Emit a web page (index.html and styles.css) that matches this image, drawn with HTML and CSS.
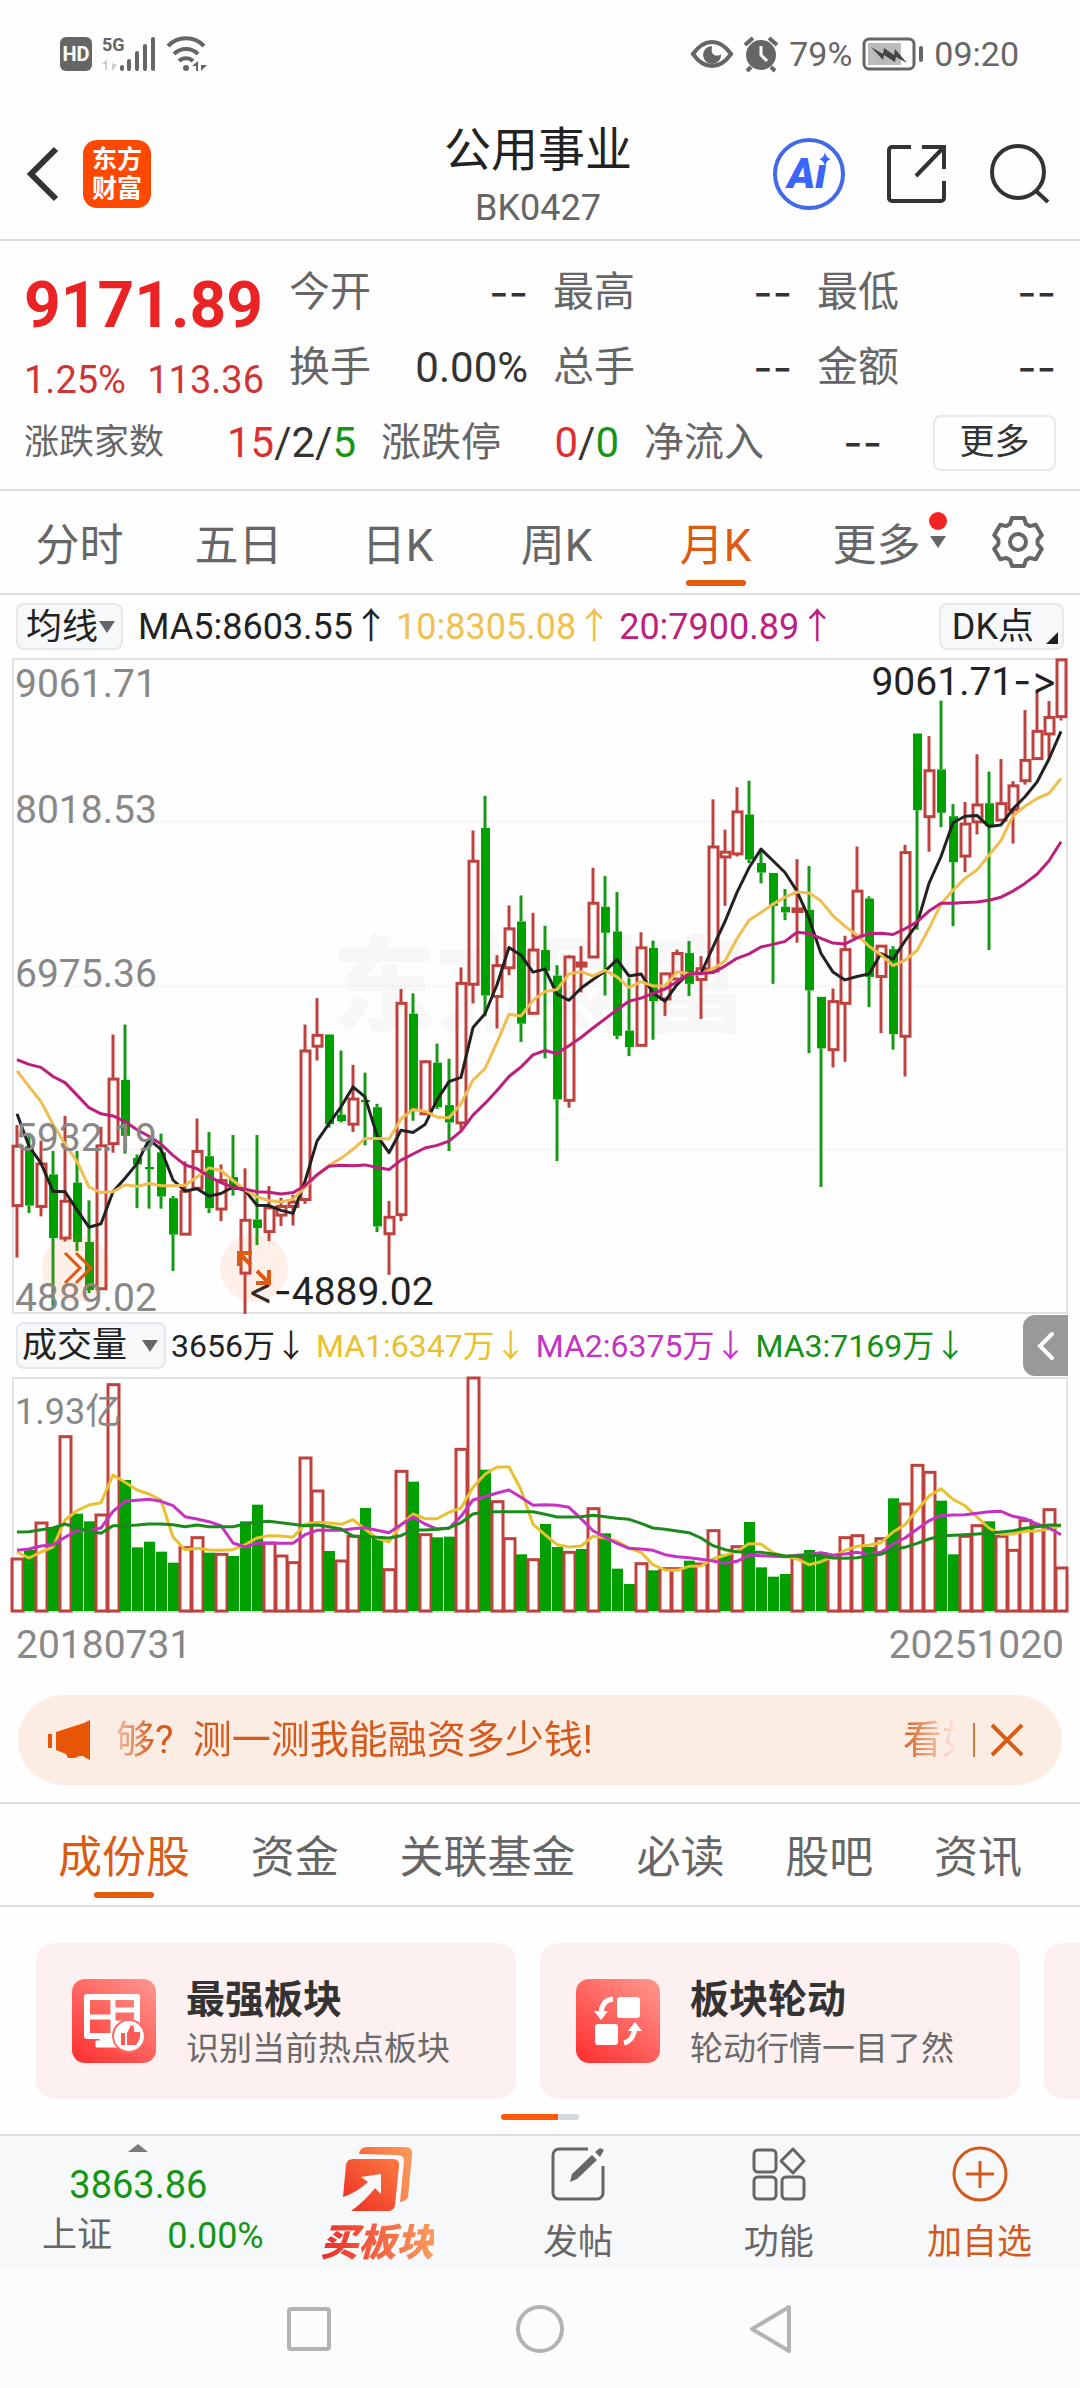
FILE: index.html
```html
<!DOCTYPE html>
<html lang="zh-CN">

<head>
    <meta charset="UTF-8">
    <meta name="viewport" content="width=device-width, initial-scale=1.0">
    <title>公用事业 BK0427</title>
    <link rel="stylesheet" href="styles.css">
    <script src="chart.js" defer></script>
</head>

<body>

    <div class="status-bar">
        <div class="status-group">
            <svg class="status-hd" width="32" height="34" viewBox="0 0 32 34">
                <rect width="32" height="34" rx="6" fill="#666" />
                <text x="16" y="24" text-anchor="middle" font-size="20" font-weight="700" fill="#fff">HD</text>
            </svg>
            <svg width="54" height="36" viewBox="0 0 54 36" fill="#666">
                <text x="0" y="15" font-size="18" font-weight="700">5G</text>
                <path d="M5 23v11H3v-6H0zM10 23v4l5 2-5 6V23z" fill="#ccc" />
                <rect x="18" y="29" width="4" height="6" rx="2" />
                <rect x="25" y="23" width="4" height="12" rx="2" />
                <rect x="33" y="15" width="4" height="20" rx="2" />
                <rect x="41" y="8" width="4" height="27" rx="2" />
                <rect x="49" y="1" width="4" height="34" rx="2" />
            </svg>
            <svg width="42" height="36" viewBox="0 0 42 36" fill="none" stroke="#666" stroke-width="4">
                <path d="M2 10a25 25 0 0 1 36 0M8 18a17 17 0 0 1 24 0M13 25a10 10 0 0 1 14 0" />
                <circle cx="20" cy="32" r="3" fill="#666" stroke="none" />
                <path d="M32 25v10h-2v-5h-4zM35 25v4h6l-6 6z" fill="#666" stroke="none" />
            </svg>
        </div>
        <div class="status-group">
            <svg width="42" height="36" viewBox="0 0 42 36">
                <path d="M2 18C9 8 15 6 21 6s12 2 19 12c-7 10-13 12-19 12S9 28 2 18z" fill="none" stroke="#666" stroke-width="4" />
                <path d="M21 10a9 9 0 1 0 9 8c-2 2-6 2-8 0s-1-5-1-8z" fill="#666" />
            </svg>
            <svg width="36" height="36" viewBox="0 0 36 36">
                <circle cx="18" cy="19" r="15" fill="#666" />
                <path d="M2 9l8-7M34 9l-8-7M8 31l-4 4M28 31l4 4" stroke="#666" stroke-width="4" />
                <path d="M18 10v9l6 6" fill="none" stroke="#fff" stroke-width="3" />
            </svg>
            <span>79%</span>
            <svg width="62" height="34" viewBox="0 0 62 34">
                <rect x="2" y="2" width="50" height="30" rx="5" fill="none" stroke="#666" stroke-width="3" />
                <rect x="6" y="6" width="33" height="22" fill="#bbb" />
                <path d="M9 10l12 7 1-6 10 7 1-6 12 14-11-6-1 5-11-7-1 5z" fill="#444" />
                <rect x="57" y="9" width="4" height="16" rx="2" fill="#666" />
            </svg>
            <span>09:20</span>
        </div>
    </div>

    <header class="header">
        <div class="header-left">
            <button class="icon-button" aria-label="返回">
                <svg width="34" height="56" viewBox="0 0 34 56" fill="none" stroke="#333" stroke-width="6">
                    <path d="M31 3L6 28l25 25" />
                </svg>
            </button>
            <a href="#" class="app-logo" aria-label="东方财富"><span>东方</span><span>财富</span></a>
        </div>
        <div class="header-title">
            <h1>公用事业</h1>
            <p>BK0427</p>
        </div>
        <div class="header-right">
            <button class="icon-button" aria-label="智能助手">
                <svg width="72" height="72" viewBox="0 0 72 72">
                    <circle cx="36" cy="36" r="34" fill="#fff" stroke="#4169e8" stroke-width="4" />
                    <text class="ai-text" x="34" y="50" text-anchor="middle" font-size="42" fill="#3a66fa">Ai</text>
                    <circle cx="52" cy="20" r="7" fill="#fff" />
                    <path d="M52 14q1 6 6 7-5 1-6 8-1-7-6-8 5-1 6-7z" fill="#3a66fa" />
                </svg>
            </button>
            <button class="icon-button" aria-label="分享">
                <svg width="60" height="60" viewBox="0 0 60 60" fill="none" stroke="#333" stroke-width="4">
                    <path d="M24 3H5a3 3 0 0 0-3 3v48a3 3 0 0 0 3 3h49a3 3 0 0 0 3-3V37" />
                    <path d="M35 3h22v22M57 3L29 32" />
                </svg>
            </button>
            <button class="icon-button" aria-label="搜索">
                <svg width="62" height="60" viewBox="0 0 62 60" fill="none" stroke="#333" stroke-width="4">
                    <circle cx="29" cy="28" r="26" />
                    <path d="M47 47l12 11" />
                </svg>
            </button>
        </div>
    </header>

    <section class="quote">
        <div class="quote-top">
            <div class="price">
                <strong>9171.89</strong>
                <p><span>1.25%</span><span>113.36</span></p>
            </div>
            <dl class="stats">
                <div><dt>今开</dt><dd class="dash">--</dd></div>
                <div><dt>最高</dt><dd class="dash">--</dd></div>
                <div><dt>最低</dt><dd class="dash">--</dd></div>
                <div><dt>换手</dt><dd>0.00%</dd></div>
                <div><dt>总手</dt><dd class="dash">--</dd></div>
                <div><dt>金额</dt><dd class="dash">--</dd></div>
            </dl>
        </div>
        <div class="quote-bottom">
            <dl class="breadth">
                <div>
                    <dt class="small">涨跌家数</dt>
                    <dd><span class="up">15</span>/2/<span class="down">5</span></dd>
                </div>
                <div>
                    <dt>涨跌停</dt>
                    <dd><span class="up">0</span>/<span class="down">0</span></dd>
                </div>
                <div><dt>净流入</dt><dd class="dash">--</dd></div>
            </dl>
            <button class="more-button">更多</button>
        </div>
    </section>

    <nav class="period-tabs" aria-label="周期">
        <button>分时</button>
        <button>五日</button>
        <button>日K</button>
        <button>周K</button>
        <button class="active">月K</button>
        <button class="period-more"><span>更多<i class="dot"></i><i class="caret"></i></span></button>
        <button class="settings" aria-label="设置">
            <svg width="52" height="52" viewBox="0 0 52 52" fill="none" stroke="#666" stroke-width="4" stroke-linejoin="round">
                <path d="M20 2H32L34 8L37.6 10.1L43.8 8.8L49.8 19.2L45.6 23.9V28.1L49.8 32.8L43.8 43.2L37.6 41.9L34 44L32 50H20L18 44L14.4 41.9L8.2 43.2L2.2 32.8L6.4 28.1V23.9L2.2 19.2L8.2 8.8L14.4 10.1L18 8Z" />
                <circle cx="26" cy="26" r="8" />
            </svg>
        </button>
    </nav>

    <section class="chart">
        <div class="chart-bar ma-bar">
            <span class="picker">
                <select aria-label="主图指标">
                    <option>均线</option>
                </select>
                <i class="caret"></i>
            </span>
            <p class="ma-values">
                <span>MA5:8603.55↑</span>
                <span class="ma10">10:8305.08↑</span>
                <span class="ma20">20:7900.89↑</span>
            </p>
            <button class="dk-button">DK点<i></i></button>
        </div>

        <div class="price-chart">
            <svg id="priceChart" viewBox="0 0 1056 656" role="img" aria-label="月K线"></svg>
            <button class="float-button scroll-button" aria-label="前进">
                <svg width="34" height="34" viewBox="0 0 34 34" fill="none" stroke="#dc5a12" stroke-width="3">
                    <path d="M6 2l15 15L6 32M17 2l15 15-15 15" />
                </svg>
            </button>
            <button class="float-button expand-button" aria-label="全屏">
                <svg width="34" height="34" viewBox="0 0 34 34" fill="none" stroke="#dc5a12" stroke-width="4">
                    <path d="M2 15V2h13M2 2l12 12M32 19v13H19M32 32L20 20" />
                </svg>
            </button>
        </div>

        <div class="chart-bar volume-bar">
            <span class="picker">
                <select aria-label="副图指标">
                    <option>成交量</option>
                </select>
                <i class="caret"></i>
            </span>
            <p class="volume-values">
                <span>3656万↓</span>
                <span class="vol-ma1">MA1:6347万↓</span>
                <span class="vol-ma2">MA2:6375万↓</span>
                <span class="vol-ma3">MA3:7169万↓</span>
            </p>
            <button class="collapse-button" aria-label="展开">
                <svg width="18" height="30" viewBox="0 0 18 30" fill="none" stroke="#fff" stroke-width="4" stroke-linecap="round">
                    <path d="M15 3L3 15l12 12" />
                </svg>
            </button>
        </div>

        <div class="volume-chart">
            <svg id="volumeChart" viewBox="0 0 1056 236" role="img" aria-label="成交量"></svg>
        </div>

        <div class="dates"><time>20180731</time><time>20251020</time></div>
    </section>

    <aside class="notice">
        <svg width="48" height="40" viewBox="0 0 48 40" fill="#e85505">
            <path d="M0 14h4v14H0zM8 12L36 3l6-3v40l-6-3v-1h-5l-4 2h-7l-2-4-10-4z" />
        </svg>
        <a href="#" class="notice-text">
            <span>够? &nbsp;测一测我能融资多少钱!</span>
            <span class="notice-next">看如</span>
        </a>
        <button class="notice-close" aria-label="关闭">
            <svg width="34" height="34" viewBox="0 0 34 34" fill="none" stroke="#dc5a12" stroke-width="4">
                <path d="M2 2l30 30M32 2L2 32" />
            </svg>
        </button>
    </aside>

    <nav class="section-tabs" aria-label="板块内容">
        <button class="active">成份股</button>
        <button>资金</button>
        <button>关联基金</button>
        <button>必读</button>
        <button>股吧</button>
        <button>资讯</button>
    </nav>

    <section class="promo">
        <div class="cards">
            <a href="#" class="card">
                <svg width="84" height="84" viewBox="0 0 84 84">
                    <defs>
                        <linearGradient id="cardFill" x1="0" y1="1" x2="0.8" y2="0">
                            <stop offset="0" stop-color="#ff2d2d" />
                            <stop offset="1" stop-color="#ff9088" />
                        </linearGradient>
                    </defs>
                    <rect width="84" height="84" rx="13" fill="url(#cardFill)" />
                    <path d="M15 18h50v39H15z" fill="none" stroke="#fff" stroke-width="6" stroke-linejoin="round" />
                    <path d="M41 18v40M17 38h25M42 31h25M42 44h25" stroke="#fff" stroke-width="5" />
                    <path d="M28 57h14v7h-14zM24 62h24v6H24z" fill="#fff" stroke="#fff" />
                    <circle cx="57" cy="57" r="16" fill="#fff" stroke="#ff6a65" stroke-width="2" />
                    <path d="M49 54h4v12h-4zM55 54l4-8q4 0 3 7h6q1 7-4 13h-9z" fill="#ff5a55" />
                </svg>
                <span class="card-text"><strong>最强板块</strong><span>识别当前热点板块</span></span>
            </a>
            <a href="#" class="card">
                <svg width="84" height="84" viewBox="0 0 84 84">
                    <rect width="84" height="84" rx="13" fill="url(#cardFill)" />
                    <rect x="41" y="18" width="23" height="21" rx="3" fill="#fff" />
                    <rect x="19" y="45" width="23" height="21" rx="3" fill="#fff" />
                    <path d="M37 20Q26 21 25 34M48 64q9-2 11-15" fill="none" stroke="#fff" stroke-width="5" />
                    <path d="M18 32h14l-7 9zM52 52h14l-7-9z" fill="#fff" />
                </svg>
                <span class="card-text"><strong>板块轮动</strong><span>轮动行情一目了然</span></span>
            </a>
            <div class="card"></div>
        </div>
        <div class="pager"></div>
    </section>

    <footer class="toolbar">
        <a href="#" class="index">
            <i class="caret-up"></i>
            <strong>3863.86</strong>
            <span><em>上证</em><b>0.00%</b></span>
        </a>
        <button class="hot">
            <svg width="72" height="66" viewBox="0 0 72 66">
                <defs>
                    <linearGradient id="hotBack" x1="0" y1="0.3" x2="1" y2="0">
                        <stop offset="0" stop-color="#f8673a" />
                        <stop offset="1" stop-color="#f89c5c" />
                    </linearGradient>
                    <linearGradient id="hotFront" x1="0" y1="1" x2="1" y2="0">
                        <stop offset="0" stop-color="#ee2b24" />
                        <stop offset="1" stop-color="#fb7b40" />
                    </linearGradient>
                </defs>
                <path d="M18 8q1-7 8-7h38q8 0 7 8l-4 42q-1 4-8 5l4-41q0-6-7-6z" fill="url(#hotBack)" />
                <path d="M5 19q1-6 7-6h40q7 0 6 7l-4 39q-1 6-7 6H10q14-10 24-23l6 6V28l-20 3 7 5Q15 47 2 51z" fill="url(#hotFront)" />
            </svg>
            <span>买板块</span>
        </button>
        <button>
            <svg width="56" height="56" viewBox="0 0 56 56" fill="none" stroke="#666" stroke-width="3">
                <path d="M38 3H9a6 6 0 0 0-6 6v38a6 6 0 0 0 6 6h38a6 6 0 0 0 6-6V20" />
                <path d="M20 36l2-8L42 9l5 5-20 19zM45 6l5-4 4 2-4 7z" fill="#666" stroke="none" />
            </svg>
            <span>发帖</span>
        </button>
        <button>
            <svg width="56" height="56" viewBox="0 0 56 56" fill="none" stroke="#666" stroke-width="3">
                <rect x="3" y="4" width="22" height="22" rx="4" />
                <rect x="3" y="31" width="22" height="22" rx="4" />
                <rect x="31" y="31" width="22" height="22" rx="4" />
                <path d="M42 3l11 12-11 12-12-12z" stroke-linejoin="round" />
            </svg>
            <span>功能</span>
        </button>
        <button class="add">
            <svg width="56" height="56" viewBox="0 0 56 56" fill="none" stroke="#d35a1c" stroke-width="3">
                <circle cx="28" cy="28" r="26" />
                <path d="M28 15v27M14 28h28" />
            </svg>
            <span>加自选</span>
        </button>
    </footer>

    <div class="system-nav">
        <button class="icon-button" aria-label="最近任务">
            <svg width="48" height="50" viewBox="0 0 48 50" fill="none" stroke="#b3b3b3" stroke-width="4">
                <rect x="4" y="5" width="40" height="40" rx="2" />
            </svg>
        </button>
        <button class="icon-button" aria-label="主屏幕">
            <svg width="50" height="50" viewBox="0 0 50 50" fill="none" stroke="#b3b3b3" stroke-width="4">
                <circle cx="25" cy="25" r="22" />
            </svg>
        </button>
        <button class="icon-button" aria-label="系统返回">
            <svg width="46" height="50" viewBox="0 0 46 50" fill="none" stroke="#b3b3b3" stroke-width="4" stroke-linejoin="round">
                <path d="M41 3v44L4 25z" />
            </svg>
        </button>
    </div>

</body>

</html>
```
FILE: styles.css
```css
* {
    box-sizing: border-box;
}

body {
    margin: 0;
    background-color: #fefefe;
    color: #333;
    font-family: Roboto, "Noto Sans CJK SC", sans-serif;
    line-height: 1;
}

h1,
p,
dl,
dd {
    margin: 0;
}

button,
select {
    margin: 0;
    padding: 0;
    border: 0;
    background: none;
    color: inherit;
    font: inherit;
}

a {
    color: inherit;
    text-decoration: none;
}

svg {
    display: block;
    flex: none;
    overflow: visible;
}

i,
em {
    font-style: normal;
}

.up {
    color: #dc3030;
}

.down {
    color: #149614;
}

.caret {
    border: 8px solid transparent;
    border-top: 12px solid #666;
    border-bottom: 0;
}

/* status bar */

.status-bar {
    display: flex;
    justify-content: space-between;
    align-items: center;
    min-height: 108px;
    padding: 0 61px 0 60px;
    color: #666;
    font-size: 34px;
}

.status-group {
    display: flex;
    align-items: center;
    gap: 10px;
}

/* header */

.header {
    display: grid;
    grid-template-columns: 1fr auto 1fr;
    align-items: center;
    height: 133px;
    padding: 0 29px 0 25px;
    border-bottom: 2px solid #dcdcdc;
}

.header-left {
    display: flex;
    align-items: center;
    gap: 24px;
}

.app-logo {
    display: flex;
    flex-direction: column;
    align-items: center;
    justify-content: center;
    width: 68px;
    height: 68px;
    border-radius: 14px;
    background-color: #ff4800;
    color: #fff;
    font-size: 25px;
    font-weight: 700;
    line-height: 29px;
}

.header-title {
    padding-top: 8px;
    text-align: center;
}

.header-title h1 {
    color: #222;
    font-size: 47px;
    font-weight: 400;
    line-height: 60px;
}

.header-title p {
    color: #666;
    font-size: 36px;
    line-height: 56px;
}

.header-right {
    display: flex;
    align-items: center;
    justify-content: flex-end;
    gap: 42px;
}

.ai-text {
    font-weight: 900;
    font-style: italic;
}

/* quote */

.quote {
    padding: 14px 24px 9px;
    border-bottom: 2px solid #dcdcdc;
}

.quote-top {
    display: flex;
    gap: 25px;
}

.price {
    flex: none;
    width: 240px;
    padding-top: 2px;
    color: #ea2424;
}

.price strong {
    display: block;
    font-size: 64px;
    line-height: 98px;
}

.price p {
    display: flex;
    justify-content: space-between;
    color: #d03434;
    font-size: 38px;
    line-height: 50px;
}

.stats {
    flex: 1;
    display: grid;
    grid-template-columns: repeat(3, 1fr);
    column-gap: 25px;
}

.stats div,
.breadth div {
    display: flex;
    justify-content: space-between;
    line-height: 75px;
    white-space: nowrap;
}

dt {
    color: #666;
    font-size: 41px;
}

dt.small {
    font-size: 35px;
}

.breadth dt:not(.small) {
    font-size: 40px;
}

dd {
    font-size: 42px;
}

.dash {
    font-family: Inter, sans-serif;
}

.quote-bottom {
    display: flex;
    align-items: center;
    gap: 51px;
}

.breadth {
    flex: 1;
    display: grid;
    grid-template-columns: 332fr 238fr 238fr;
    column-gap: 25px;
}

.more-button {
    width: 123px;
    height: 56px;
    border: 2px solid #e8e8e8;
    border-radius: 8px;
    font-size: 35px;
}

/* period tabs */

.period-tabs {
    display: grid;
    grid-template-columns: repeat(5, 159fr) 185fr 76fr;
    height: 104px;
    padding-right: 24px;
    border-bottom: 2px solid #dcdcdc;
    color: #666;
    font-size: 44px;
}

.period-tabs button {
    display: flex;
    align-items: center;
    justify-content: center;
    padding-top: 8px;
}

.period-tabs .settings {
    padding-top: 0;
}

.period-tabs .active,
.section-tabs .active {
    position: relative;
    color: #dc5a12;
}

.period-tabs .active::after,
.section-tabs .active::after {
    content: "";
    position: absolute;
    left: 50%;
    bottom: 7px;
    width: 60px;
    height: 6px;
    margin-left: -30px;
    border-radius: 3px;
    background-color: #e65a0b;
}

.period-more span {
    position: relative;
    padding-right: 22px;
}

.period-more .dot {
    position: absolute;
    top: -12px;
    right: -4px;
    width: 18px;
    height: 18px;
    border-radius: 50%;
    background-color: #f22424;
}

.period-more .caret {
    position: absolute;
    top: 12px;
    right: -3px;
}

/* charts */

.chart-bar {
    display: flex;
    align-items: center;
    height: 63px;
    padding: 0 16px;
    color: #222;
    white-space: nowrap;
}

.picker {
    display: flex;
    align-items: center;
    height: 47px;
    padding: 0 6px 0 8px;
    border: 2px solid #e4e8ec;
    border-radius: 8px;
    background-color: #f6f8fa;
    font-size: 36px;
}

.picker select {
    appearance: none;
}

.ma-values {
    display: flex;
    gap: 7px;
    padding-left: 15px;
    font-size: 36px;
}

.ma10 {
    color: #f0c050;
}

.ma20 {
    color: #be1e7d;
}

.dk-button {
    display: flex;
    align-items: center;
    height: 47px;
    margin-left: auto;
    padding: 0 4px 0 11px;
    border: 2px solid #e4e8ec;
    border-radius: 8px;
    background-color: #f6f8fa;
    font-size: 36px;
}

.dk-button i {
    align-self: flex-end;
    margin: 0 0 4px 12px;
    border-left: 12px solid transparent;
    border-bottom: 12px solid #222;
}

.price-chart {
    position: relative;
    margin: 0 12px;
}

.price-chart > svg,
.volume-chart > svg {
    width: 100%;
    height: auto;
}

.volume-chart {
    margin: 0 12px;
}

.frame {
    fill: none;
    stroke: #e2e2e2;
    stroke-width: 2;
}

.grid-line {
    stroke: #e4e4e4;
    stroke-dasharray: 2 2;
}

.watermark {
    fill: #f7f7f7;
    font-size: 104px;
    font-weight: 900;
}

.axis-label {
    fill: #888;
    font-size: 39px;
}

.volume-chart .axis-label {
    font-size: 36px;
}

.peak-label {
    fill: #222;
    font-size: 39px;
}

/* Inter would join "->" into one arrow glyph */
.peak-arrow {
    font-family: Inter, sans-serif;
    font-variant-ligatures: none;
}

.rise {
    fill: none;
    stroke: #be413e;
    stroke-width: 3;
}

.fall {
    fill: #00a000;
}

.wick-rise {
    stroke: #be413e;
    stroke-width: 3;
}

.wick-fall {
    stroke: #149a14;
    stroke-width: 3;
}

.line {
    fill: none;
    stroke-width: 3;
    stroke-linejoin: round;
}

.float-button {
    position: absolute;
    bottom: 12px;
    display: flex;
    align-items: center;
    justify-content: center;
    width: 68px;
    height: 68px;
    border-radius: 50%;
    background-color: rgba(255, 110, 50, 0.1);
}

.scroll-button {
    left: 30px;
}

.expand-button {
    left: 208px;
}

.volume-bar {
    padding-right: 12px;
}

.volume-bar .picker {
    padding-left: 4px;
    font-size: 35px;
}

.volume-bar .caret {
    margin-left: 14px;
}

.volume-values {
    display: flex;
    gap: 9px;
    padding-left: 5px;
    font-size: 32px;
}

.vol-ma1 {
    color: #e8c22e;
}

.vol-ma2 {
    color: #c433c4;
}

.vol-ma3 {
    color: #149114;
}

.collapse-button {
    display: flex;
    align-items: center;
    justify-content: center;
    width: 45px;
    height: 61px;
    margin-left: auto;
    border-radius: 12px 0 0 12px;
    background-color: #999;
}

.dates {
    display: flex;
    justify-content: space-between;
    padding: 0 16px;
    color: #888;
    font-size: 39px;
    line-height: 64px;
}

/* notice */

.notice {
    display: flex;
    align-items: center;
    height: 90px;
    margin: 18px 18px 17px;
    padding: 0 38px 0 30px;
    border-radius: 45px;
    background-color: #fcede4;
    color: #d65a1c;
    font-size: 39px;
}

.notice-text {
    flex: 1;
    display: flex;
    justify-content: space-between;
    padding: 0 4px 0 20px;
    line-height: 60px;
    white-space: nowrap;
    mask-image: linear-gradient(to right, transparent, #000 60px, #000 calc(100% - 60px), transparent calc(100% - 4px));
}

.notice-next {
    margin-right: -24px;
}

.notice-close {
    margin-left: 12px;
    padding-left: 15px;
    border-left: 2px solid #dc7a45;
}

/* section tabs */

.section-tabs {
    display: flex;
    justify-content: space-between;
    height: 105px;
    padding: 0 58px;
    border-top: 2px solid #dcdcdc;
    border-bottom: 2px solid #dcdcdc;
    color: #666;
    font-size: 44px;
}

.section-tabs button {
    padding-top: 6px;
}

/* promo cards */

.promo {
    padding-top: 36px;
    overflow: hidden;
}

.cards {
    display: flex;
    gap: 24px;
    padding-left: 36px;
}

.card {
    flex: none;
    display: flex;
    align-items: center;
    gap: 30px;
    width: 480px;
    height: 156px;
    padding: 0 36px;
    border-radius: 18px;
    background-color: #fdf0f0;
}

.card-text {
    display: flex;
    flex-direction: column;
    padding-top: 4px;
    color: #6a6a6a;
    font-size: 33px;
    line-height: 46px;
}

.card-text strong {
    color: #333;
    font-size: 39px;
    line-height: 52px;
}

.pager {
    width: 78px;
    height: 6px;
    margin: 15px auto 14px;
    border-radius: 3px;
    background: linear-gradient(to right, #ff5a0a 57px, #d5d9de 57px);
}

/* toolbar */

.toolbar {
    display: grid;
    grid-template-columns: 277fr repeat(4, 201fr);
    height: 136px;
    border-top: 2px solid #dcdce2;
    background-color: #f7f8fa;
    color: #666;
    font-size: 35px;
}

.index {
    display: flex;
    flex-direction: column;
    align-items: center;
    padding-top: 8px;
    color: #149614;
}

.caret-up {
    border: 10px solid transparent;
    border-top: 0;
    border-bottom: 8px solid #7a7a80;
}

.index strong {
    font-size: 38px;
    font-weight: 400;
    line-height: 66px;
}

.index span {
    align-self: stretch;
    display: flex;
    justify-content: space-between;
    padding: 0 13px 0 42px;
    line-height: 36px;
}

.index em {
    color: #666;
}

.index b {
    font-size: 36px;
    font-weight: 400;
}

.toolbar button {
    display: flex;
    flex-direction: column;
    align-items: center;
    justify-content: space-between;
    padding: 10px 0 2px;
}

.toolbar button span {
    line-height: 50px;
}

.toolbar .hot span {
    background: linear-gradient(to right, #ea2d28, #fa9a5c);
    background-clip: text;
    color: transparent;
    font-size: 38px;
    font-weight: 900;
    font-style: italic;
}

.toolbar .add {
    color: #d35a1c;
}

.system-nav {
    display: grid;
    grid-template-columns: repeat(3, 231px);
    justify-content: center;
    justify-items: center;
    height: 118px;
    background-color: #fcfcfc;
}
```
FILE: chart.js
```js
const STEP = 12;
const FIRST = 5;

// candles: direction, high, body top, body bottom, low (levels counted down from the top)
const LEVEL_TOP = 18;
const LEVEL_RANGE = 1510;

const candles = [
    ["r", 1094, 1143, 1280, 1400], ["g", 1112, 1143, 1280, 1297], ["r", 1130, 1184, 1282, 1305], ["g", 1154, 1208, 1355, 1512],
    ["r", 1073, 1270, 1355, 1363], ["g", 1154, 1227, 1364, 1385], ["g", 1268, 1364, 1475, 1482], ["r", 1098, 1142, 1472, 1472],
    ["r", 885, 988, 1137, 1158], ["g", 862, 990, 1119, 1160], ["g", 1162, 1170, 1185, 1286], ["g", 1130, 1191, 1196, 1287],
    ["g", 1114, 1157, 1259, 1287], ["g", 1258, 1263, 1347, 1431], ["r", 1178, 1247, 1346, 1346], ["r", 1079, 1155, 1240, 1240],
    ["g", 1110, 1166, 1286, 1297], ["r", 1185, 1222, 1288, 1316], ["g", 1117, 1214, 1244, 1257], ["r", 1194, 1314, 1436, 1530],
    ["g", 1117, 1312, 1332, 1371], ["r", 1235, 1285, 1340, 1362], ["r", 1262, 1282, 1302, 1327], ["r", 1255, 1272, 1282, 1326],
    ["r", 862, 923, 1266, 1276], ["r", 801, 887, 912, 945], ["g", 885, 885, 1092, 1100], ["g", 922, 1070, 1085, 1088],
    ["r", 955, 1034, 1092, 1110], ["g", 973, 1036, 1041, 1141], ["g", 1045, 1053, 1328, 1341], ["r", 1269, 1307, 1345, 1440],
    ["r", 780, 813, 1301, 1316], ["g", 790, 837, 1062, 1084], ["r", 945, 948, 1068, 1068], ["g", 906, 950, 1053, 1057],
    ["g", 941, 1048, 1088, 1154], ["r", 730, 767, 1089, 1105], ["r", 414, 485, 769, 813], ["g", 334, 408, 795, 843],
    ["r", 702, 726, 797, 871], ["r", 587, 641, 731, 748], ["g", 564, 624, 860, 902], ["r", 604, 690, 836, 836],
    ["g", 634, 690, 738, 940], ["g", 725, 749, 1035, 1177], ["r", 702, 706, 1037, 1054], ["r", 681, 720, 727, 788],
    ["r", 500, 582, 706, 706], ["g", 519, 590, 650, 795], ["g", 556, 647, 888, 896], ["g", 755, 876, 914, 935],
    ["r", 649, 685, 910, 910], ["g", 668, 685, 808, 897], ["r", 745, 745, 803, 842], ["r", 689, 698, 757, 757],
    ["g", 669, 697, 768, 796], ["r", 704, 733, 758, 849], ["r", 342, 452, 738, 738], ["r", 412, 464, 475, 588],
    ["r", 314, 371, 468, 474], ["g", 299, 377, 481, 489], ["g", 456, 489, 511, 536], ["g", 512, 512, 588, 768],
    ["g", 549, 590, 603, 621], ["r", 480, 595, 601, 673], ["g", 496, 597, 783, 928], ["g", 798, 798, 917, 1237],
    ["r", 779, 809, 920, 961], ["r", 657, 689, 813, 948], ["r", 451, 554, 658, 658], ["g", 566, 571, 752, 822],
    ["r", 681, 681, 751, 882], ["g", 681, 688, 884, 920], ["r", 447, 465, 889, 982], ["g", 190, 190, 367, 643],
    ["r", 196, 276, 382, 463], ["g", 114, 273, 373, 406], ["g", 353, 381, 487, 635], ["r", 348, 399, 473, 510],
    ["r", 238, 355, 394, 423], ["g", 278, 351, 404, 690], ["r", 249, 352, 390, 390], ["r", 300, 311, 366, 444],
    ["r", 136, 252, 299, 308], ["r", 92, 185, 248, 248], ["r", 115, 153, 191, 246], ["r", 20, 20, 151, 160]
];

const ma5 = [1068, 1143, 1182, 1247, 1248, 1290, 1330, 1322, 1248, 1217, 1183, 1127, 1150, 1221, 1246, 1241, 1258, 1252, 1237, 1245, 1279, 1280, 1291, 1298, 1224, 1131, 1091, 1052, 1006, 1029, 1118, 1158, 1106, 1111, 1093, 1036, 994, 984, 869, 837, 770, 684, 702, 741, 734, 792, 806, 778, 758, 739, 712, 750, 745, 789, 808, 770, 743, 744, 683, 624, 557, 500, 457, 484, 511, 554, 617, 698, 741, 759, 751, 745, 698, 711, 669, 630, 536, 474, 396, 381, 379, 405, 401, 364, 336, 302, 249, 185];
const ma10 = [969, 1005, 1040, 1092, 1138, 1178, 1237, 1250, 1248, 1232, 1236, 1229, 1234, 1234, 1233, 1214, 1193, 1199, 1222, 1243, 1260, 1269, 1272, 1265, 1238, 1210, 1187, 1171, 1150, 1125, 1125, 1126, 1080, 1058, 1062, 1076, 1077, 1045, 990, 964, 903, 838, 842, 806, 786, 781, 745, 740, 750, 737, 752, 777, 763, 773, 773, 741, 744, 746, 733, 715, 664, 621, 603, 584, 568, 556, 558, 577, 611, 635, 656, 681, 701, 726, 714, 691, 640, 584, 552, 524, 505, 471, 437, 380, 358, 340, 328, 294];
const ma20 = [943, 954, 961, 982, 996, 1025, 1054, 1068, 1073, 1086, 1105, 1120, 1138, 1164, 1186, 1195, 1213, 1227, 1238, 1242, 1248, 1249, 1253, 1250, 1234, 1209, 1189, 1187, 1188, 1186, 1192, 1197, 1175, 1161, 1147, 1141, 1131, 1108, 1071, 1044, 1014, 982, 960, 932, 922, 929, 911, 892, 870, 849, 828, 808, 801, 790, 780, 763, 745, 744, 742, 727, 709, 699, 683, 677, 670, 649, 652, 663, 674, 676, 662, 652, 651, 654, 641, 625, 600, 582, 582, 580, 579, 575, 568, 554, 536, 515, 484, 440];

// volume bars: level of the bar's top, a falling month is negative
const VOLUME_TOP = 202;

const volumes = [745, -718, 637, -650, 378, -609, -632, 613, 222, -508, -710, -693, -723, -756, 711, 681, -726, 731, -736, -632, -582, 697, 736, 756, 442, 541, -721, 751, 677, -592, -682, 777, 482, -513, 672, -680, -678, 416, 202, -477, 573, 684, -731, 747, -640, -709, 725, -715, 594, -668, -774, -820, 759, -779, 774, 774, -750, 760, 660, -731, 708, -634, -770, -798, -790, 741, -718, -724, 738, 681, 675, -709, 684, -563, 580, 464, 485, -570, -731, 677, 645, -632, 677, 719, 630, 645, 597, 772];
const volMa1 = [724, 742, 724, 709, 628, 600, 583, 576, 493, 515, 538, 550, 568, 679, 717, 713, 718, 719, 717, 702, 682, 675, 676, 680, 641, 635, 637, 641, 627, 655, 683, 694, 642, 610, 624, 624, 605, 592, 530, 491, 469, 469, 537, 641, 672, 702, 709, 706, 677, 682, 692, 712, 725, 762, 778, 779, 767, 766, 745, 734, 721, 699, 700, 726, 737, 745, 762, 753, 738, 719, 707, 704, 696, 664, 642, 599, 556, 534, 566, 585, 619, 652, 671, 670, 662, 661, 655, 645];
const volMa2 = [719, 715, 706, 702, 680, 660, 660, 652, 602, 572, 569, 566, 572, 585, 618, 625, 633, 645, 697, 709, 698, 698, 698, 698, 672, 659, 659, 659, 654, 651, 659, 666, 642, 619, 640, 655, 653, 617, 568, 558, 547, 538, 560, 584, 582, 584, 590, 624, 660, 680, 698, 713, 715, 719, 732, 738, 741, 746, 751, 758, 752, 733, 735, 737, 738, 734, 731, 726, 734, 730, 725, 732, 725, 700, 682, 656, 630, 615, 613, 612, 608, 603, 602, 617, 624, 640, 652, 672];
const volMa3 = [664, 663, 657, 652, 640, 651, 662, 668, 645, 645, 643, 640, 640, 642, 648, 643, 648, 648, 648, 640, 635, 632, 636, 641, 645, 643, 648, 655, 676, 678, 680, 682, 675, 658, 658, 656, 652, 636, 610, 604, 603, 603, 603, 603, 611, 619, 619, 618, 614, 618, 623, 626, 638, 652, 656, 661, 666, 682, 705, 717, 723, 725, 725, 730, 736, 736, 734, 735, 742, 743, 741, 735, 731, 717, 710, 698, 685, 676, 674, 672, 670, 668, 664, 660, 653, 648, 643, 644];

function add(parent, name, attrs, text) {
    let node = document.createElementNS("http://www.w3.org/2000/svg", name);
    for (let key in attrs) {
        node.setAttribute(key, attrs[key]);
    }
    if (text) {
        node.textContent = text;
    }
    parent.appendChild(node);
    return node;
}

function drawLine(svg, values, scale, color) {
    let points = values.map((v, i) => `${FIRST + i * STEP},${scale(v).toFixed(1)}`).join(" ");
    add(svg, "polyline", { class: "line", points: points, stroke: color });
}

function drawPrice() {
    let svg = document.getElementById("priceChart");
    let y = v => 1 + (v - LEVEL_TOP) * 654 / LEVEL_RANGE;

    add(svg, "text", { class: "watermark", x: 528, y: 366, "text-anchor": "middle" }, "东方财富");
    for (let line of [164, 328, 492]) {
        add(svg, "line", { class: "grid-line", x1: 0, x2: 1056, y1: line, y2: line });
    }
    add(svg, "rect", { class: "frame", x: 1, y: 1, width: 1054, height: 654 });

    candles.forEach(([kind, high, top, bottom, low], i) => {
        let x = FIRST + i * STEP;
        let rise = kind === "r";
        let wick = rise ? "wick-rise" : "wick-fall";
        add(svg, "line", { class: wick, x1: x, x2: x, y1: y(high), y2: y(top) });
        add(svg, "line", { class: wick, x1: x, x2: x, y1: y(bottom), y2: y(low) });
        add(svg, "rect", { class: rise ? "rise" : "fall", x: x - 4, y: y(top), width: 9, height: y(bottom) - y(top) });
    });

    drawLine(svg, ma5, y, "#222");
    drawLine(svg, ma10, y, "#f0be50");
    drawLine(svg, ma20, y, "#be1e7d");

    add(svg, "text", { class: "axis-label", x: 3, y: 39 }, "9061.71");
    add(svg, "text", { class: "axis-label", x: 3, y: 165 }, "8018.53");
    add(svg, "text", { class: "axis-label", x: 3, y: 329 }, "6975.36");
    add(svg, "text", { class: "axis-label", x: 3, y: 493 }, "5932.19");
    add(svg, "text", { class: "axis-label", x: 3, y: 653 }, "4889.02");

    let high = add(svg, "text", { class: "peak-label", x: 1045, y: 37, "text-anchor": "end" });
    add(high, "tspan", {}, "9061.71");
    add(high, "tspan", { class: "peak-arrow" }, "->");
    let low = add(svg, "text", { class: "peak-label", x: 236, y: 647 });
    add(low, "tspan", { class: "peak-arrow" }, "<-");
    add(low, "tspan", {}, "4889.02");
}

function drawVolume() {
    let svg = document.getElementById("volumeChart");
    let y = v => 1 + (v - VOLUME_TOP) / 3;

    add(svg, "rect", { class: "frame", x: 1, y: 1, width: 1054, height: 234 });

    volumes.forEach((v, i) => {
        let x = FIRST + i * STEP;
        let top = y(Math.abs(v));
        add(svg, "rect", { class: v > 0 ? "rise" : "fall", x: x - 5, y: top, width: 11, height: 234 - top });
    });

    drawLine(svg, volMa1, y, "#e8c22e");
    drawLine(svg, volMa2, y, "#c433c4");
    drawLine(svg, volMa3, y, "#1b8c1b");

    add(svg, "text", { class: "axis-label", x: 3, y: 47 }, "1.93亿");
}

drawPrice();
drawVolume();
```
